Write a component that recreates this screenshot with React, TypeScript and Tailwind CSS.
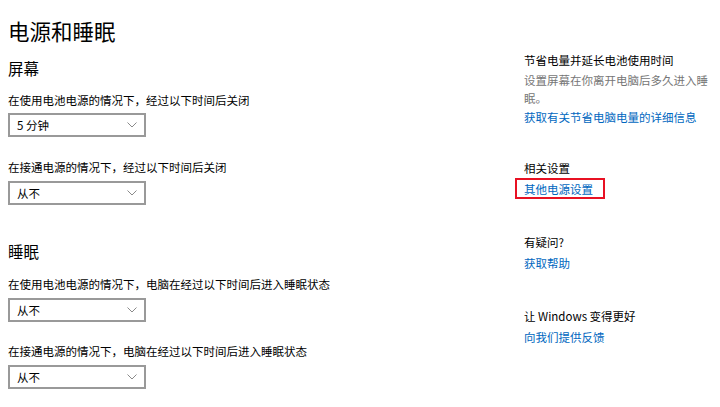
import { ReactNode } from 'react';

const font = { fontFamily: '"Noto Sans CJK SC", "Noto Sans", sans-serif' };

const Select = ({ value, className = '' }: { value: string; className?: string }) => (
  <div
    className={`flex h-[24px] w-[138px] items-center justify-between border-2 border-[#999999] bg-white pl-[7px] pr-[7px] ${className}`}
  >
    <span className="text-[11.5px] leading-[14px] text-black">{value}</span>
    <svg width="10" height="6" viewBox="0 0 10 6" fill="none">
      <path d="M0.5 0.5l4.5 4.5L9.5 0.5" stroke="#8a8a8a" strokeWidth="1" />
    </svg>
  </div>
);

const Label = ({ children, className = '' }: { children: ReactNode; className?: string }) => (
  <div className={`h-[14px] text-[11.5px] leading-[14px] text-black ${className}`}>{children}</div>
);

const Link = ({ children, className = '' }: { children: ReactNode; className?: string }) => (
  <div className={`h-[14px] text-[11.5px] leading-[14px] text-[#0067c0] ${className}`}>{children}</div>
);

export default function App() {
  return (
    <div className="flex h-[407px] w-[720px] overflow-hidden bg-white" style={font}>
      {/* Left: settings */}
      <div className="w-[515px] pl-[8px]">
        <h1 className="mt-[20px] h-[22px] text-[21.5px] leading-[22px] font-normal text-black">电源和睡眠</h1>

        <h2 className="mt-[18px] h-[16px] text-[15.5px] leading-[16px] text-black">屏幕</h2>
        <Label className="mt-[17px]">在使用电池电源的情况下，经过以下时间后关闭</Label>
        <Select value="5 分钟" className="mt-[6px]" />
        <Label className="mt-[23px]">在接通电源的情况下，经过以下时间后关闭</Label>
        <Select value="从不" className="mt-[7px]" />

        <h2 className="mt-[38px] h-[16px] text-[15.5px] leading-[16px] text-black">睡眠</h2>
        <Label className="mt-[18px]">在使用电池电源的情况下，电脑在经过以下时间后进入睡眠状态</Label>
        <Select value="从不" className="mt-[7px]" />
        <Label className="mt-[22px]">在接通电源的情况下，电脑在经过以下时间后进入睡眠状态</Label>
        <Select value="从不" className="mt-[7px]" />
      </div>

      {/* Right: related info */}
      <div className="w-[205px]">
        <Label className="mt-[53px] pl-[9px]">节省电量并延长电池使用时间</Label>
        <p className="mt-[4px] w-[195px] pl-[9px] text-[11.5px] leading-[18px] text-[#767676]">
          设置屏幕在你离开电脑后多久进入睡眠。
        </p>
        <Link className="mt-[3px] pl-[9px]">获取有关节省电脑电量的详细信息</Link>

        <Label className="mt-[37px] pl-[9px]">相关设置</Label>
        <div className="mt-[3px] flex h-[21px] w-[90px] items-center border-2 border-[#e81123] pl-[7px]">
          <Link>其他电源设置</Link>
        </div>

        <Label className="mt-[36px] pl-[9px]">有疑问?</Label>
        <Link className="mt-[7px] pl-[9px]">获取帮助</Link>

        <Label className="mt-[39px] pl-[9px]">让 Windows 变得更好</Label>
        <Link className="mt-[7px] pl-[9px]">向我们提供反馈</Link>
      </div>
    </div>
  );
}
